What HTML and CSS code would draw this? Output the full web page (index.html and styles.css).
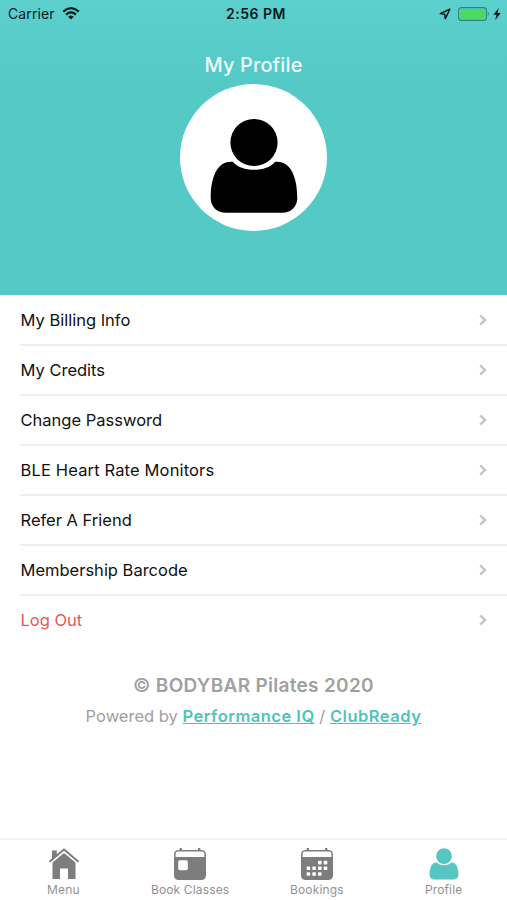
FILE: index.html
```
<!DOCTYPE html>
<html lang="en">
<head>
<meta charset="utf-8">
<title>My Profile</title>
<link rel="stylesheet" href="styles.css">
</head>
<body>
<svg class="defs" width="0" height="0" aria-hidden="true">
  <symbol id="person" viewBox="0 0 88 96">
    <circle cx="44" cy="24.5" r="23.6"/>
    <path d="M23 43.8C31 54.5 57 54.5 65 43.8C80 42 87.3 58 87.3 80C87.3 89 81 94.7 72 94.7H16C7 94.7 .7 89 .7 80C.7 58 8 42 23 43.8Z"/>
  </symbol>
  <symbol id="chevron" viewBox="0 0 8 12">
    <path d="M1.2 1.4L6 6L1.2 10.6" fill="none" stroke="#c7c7c9" stroke-width="2.5"/>
  </symbol>
</svg>
<div class="screen">
  <header class="hero">
    <div class="status">
      <div class="status-left"><span>Carrier</span>
        <svg width="18" height="13" viewBox="0 0 18 13"><g fill="none" stroke="#061a1a" stroke-width="2.2"><path d="M1.2 4.6Q9 -2.2 16.8 4.6"/><path d="M4 7.6Q9 3.3 14 7.6"/></g><path d="M9 12.5L6.2 9.7Q9 7.5 11.8 9.7Z" fill="#061a1a"/></svg>
      </div>
      <div class="status-time">2:56 PM</div>
      <div class="status-right">
        <svg width="12" height="12" viewBox="0 0 12 12"><path d="M10.8 1.2L1.3 5.6L5.8 6.2L6.3 10.7Z" fill="none" stroke="#061a1a" stroke-width="1.5" stroke-linejoin="round"/></svg>
        <svg class="battery" width="32" height="14" viewBox="0 0 32 14"><rect x=".6" y=".6" width="27.8" height="12.8" rx="3" fill="none" stroke="#328087" stroke-width="1.1"/><rect x="2" y="2" width="25" height="10" rx="1.6" fill="#4bd964"/><path d="M29.8 4.8Q32 7 29.8 9.2Z" fill="#328087"/></svg>
        <svg width="8" height="12" viewBox="0 0 8 12"><path d="M5.8 0L.3 6.8H3.5L2.2 12L7.8 4.9H4.6Z" fill="#061a1a"/></svg>
      </div>
    </div>
    <h1><span>My Profile</span></h1>
    <div class="avatar"><svg width="88" height="96"><use href="#person"/></svg></div>
  </header>
  <main>
    <ul class="list">
      <li><span>My Billing Info</span><svg width="8" height="12"><use href="#chevron"/></svg></li>
      <li><span>My Credits</span><svg width="8" height="12"><use href="#chevron"/></svg></li>
      <li><span>Change Password</span><svg width="8" height="12"><use href="#chevron"/></svg></li>
      <li><span class="wide">BLE Heart Rate Monitors</span><svg width="8" height="12"><use href="#chevron"/></svg></li>
      <li><span>Refer A Friend</span><svg width="8" height="12"><use href="#chevron"/></svg></li>
      <li><span>Membership Barcode</span><svg width="8" height="12"><use href="#chevron"/></svg></li>
      <li class="logout"><span>Log Out</span><svg width="8" height="12"><use href="#chevron"/></svg></li>
    </ul>
    <div class="credits">
      <p class="copyright"><span class="mark">©</span> BODYBAR Pilates 2020</p>
      <p class="powered">Powered by <a>Performance IQ</a> / <a>ClubReady</a></p>
    </div>
  </main>
  <nav class="tabs">
    <div class="tab">
      <svg class="house" width="32" height="32" viewBox="0 0 32 32" fill="#7d7d7d"><path d="M4 2.5H8.8V7L4 11.5Z"/><path d="M1.5 13.8L16 1.6L30.5 13.8" fill="none" stroke="#7d7d7d" stroke-width="2"/><path d="M16 4.9L27.5 14.6V31H20V20.5H12V31H4.5V14.6Z"/></svg>
      <span>Menu</span>
    </div>
    <div class="tab">
      <svg width="32" height="32" viewBox="0 0 32 32"><path d="M6.8 0V4M25.2 0V4" stroke="#7d7d7d" stroke-width="2.3"/><rect y="2" width="32" height="30" rx="4.5" fill="#7d7d7d"/><path d="M1.6 8.9V6Q1.6 3.6 4 3.6H28Q30.4 3.6 30.4 6V8.9Z" fill="#fff"/><rect x="4.2" y="12.3" width="9.6" height="10" rx="1.7" fill="#fff"/></svg>
      <span>Book Classes</span>
    </div>
    <div class="tab">
      <svg width="32" height="32" viewBox="0 0 32 32"><path d="M6.8 0V4M25.2 0V4" stroke="#7d7d7d" stroke-width="2.3"/><rect y="2" width="32" height="30" rx="4.5" fill="#7d7d7d"/><path d="M1.6 8.9V6Q1.6 3.6 4 3.6H28Q30.4 3.6 30.4 6V8.9Z" fill="#fff"/><g fill="#fff"><rect x="17" y="12.8" width="3.6" height="3.6" rx=".8"/><rect x="22.7" y="12.8" width="3.6" height="3.6" rx=".8"/><rect x="5.6" y="18.5" width="3.6" height="3.6" rx=".8"/><rect x="11.3" y="18.5" width="3.6" height="3.6" rx=".8"/><rect x="17" y="18.5" width="3.6" height="3.6" rx=".8"/><rect x="22.7" y="18.5" width="3.6" height="3.6" rx=".8"/><rect x="5.6" y="24.2" width="3.6" height="3.6" rx=".8"/><rect x="11.3" y="24.2" width="3.6" height="3.6" rx=".8"/><rect x="17" y="24.2" width="3.6" height="3.6" rx=".8"/></g></svg>
      <span>Bookings</span>
    </div>
    <div class="tab active">
      <svg width="32" height="32"><use href="#person"/></svg>
      <span>Profile</span>
    </div>
  </nav>
</div>
</body>
</html>
```
FILE: styles.css
```
* { box-sizing: border-box; margin: 0; padding: 0; }
body { font-family: Inter, "Liberation Sans", sans-serif; background: #fff; color: #111; }
svg { display: block; flex: none; }
.defs { position: absolute; }
.screen { height: 900px; display: flex; flex-direction: column; overflow: hidden; }
.hero { height: 295px; flex: none; background: linear-gradient(#5cd0cd, #55c9c6 80px); display: flex; flex-direction: column; align-items: center; }
.status { width: 100%; height: 27px; display: grid; grid-template-columns: 1fr auto 1fr; align-items: center; padding: 0 6px 0 8px; color: #061a1a; font-size: 14px; }
.status-left { display: flex; align-items: center; gap: 7px; }
.status-left span { letter-spacing: .1px; }
.status-time { font-weight: 600; font-size: 14px; letter-spacing: .5px; padding-left: 3px; }
.status-right { display: flex; align-items: center; justify-content: flex-end; gap: 7px; }
.status-right .battery { margin-right: -4px; }
h1 { height: 57px; padding-top: 26px; font-size: 20px; line-height: 25px; font-weight: 500; letter-spacing: .1px; color: #eefcfc; }
.avatar { width: 147px; height: 147px; border-radius: 50%; background: #fff; display: flex; justify-content: center; padding-top: 34px; }
main { flex: 1; }
.list { list-style: none; padding-left: 20px; }
.list li { height: 50px; display: flex; align-items: center; justify-content: space-between; padding: 0 20px 0 .5px; font-size: 16.5px; border-top: 2px solid #efeff0; }
.list li:first-child { height: 49px; padding-top: 1px; border-top: 0; }
.list .wide { letter-spacing: .15px; }
.list li.logout { color: #e5565b; }
.credits { text-align: center; padding-top: 30px; color: #a0a0a0; }
.copyright { font-size: 19px; line-height: 24px; font-weight: 600; letter-spacing: .3px; }
.mark { font-weight: 500; }
.powered { font-size: 16.5px; line-height: 24px; margin-top: 6px; }
.powered a { color: #4fc4bd; font-weight: 600; letter-spacing: .5px; text-decoration: underline; }
.tabs { height: 62px; flex: none; border-top: 2px solid #f3f3f3; display: grid; grid-template-columns: repeat(4, 1fr); }
.tab { display: flex; flex-direction: column; align-items: center; padding-top: 8px; fill: #55c6c1; color: #929292; font-size: 12px; line-height: 16px; }
.tab .house { margin-left: 2px; }
.tab span { margin-top: 2px; letter-spacing: .15px; }
```
